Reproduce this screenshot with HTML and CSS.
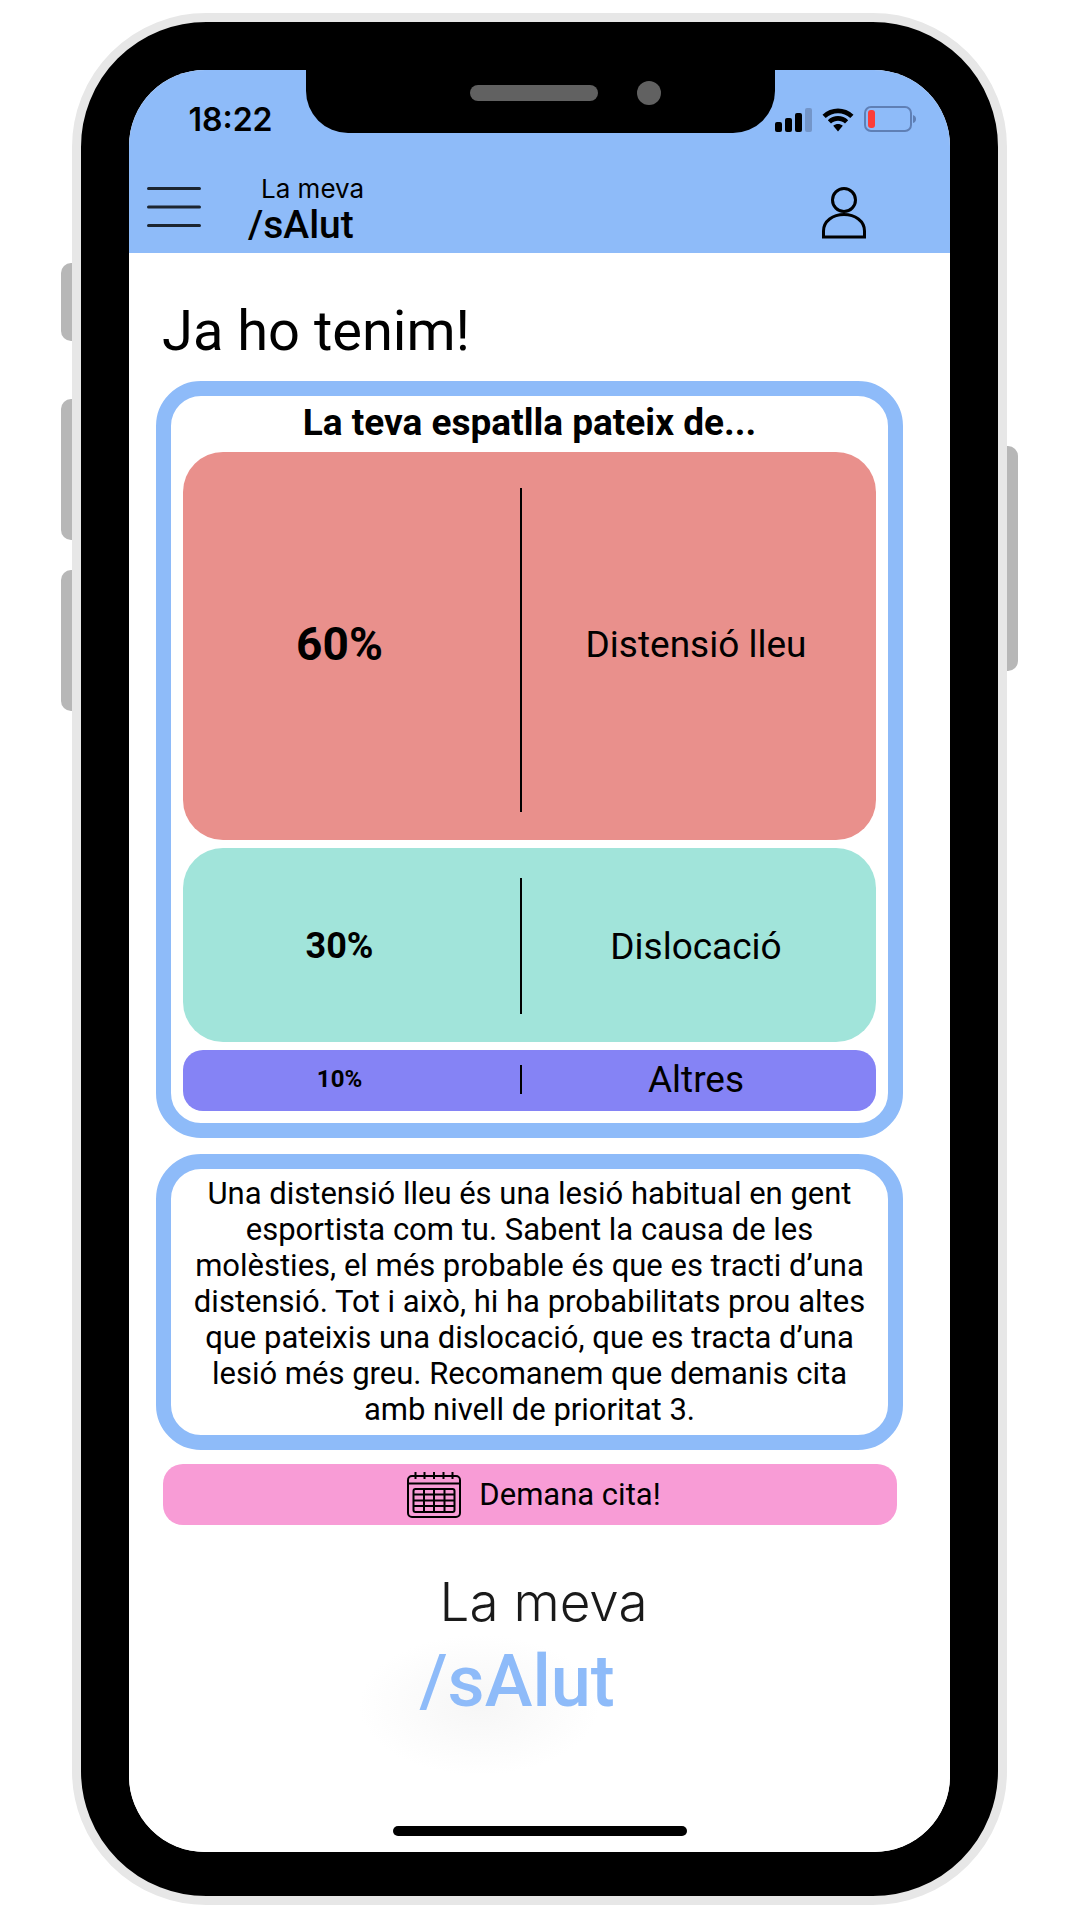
FILE: index.html
```html
<!DOCTYPE html>
<html lang="ca">
<head>
  <meta charset="utf-8">
  <meta name="viewport" content="width=device-width, initial-scale=1">
  <title>La meva /sAlut</title>
  <link rel="stylesheet" href="styles.css">
</head>
<body>
  <div class="phone">
    <span class="side-key side-key--mute"></span>
    <span class="side-key side-key--up"></span>
    <span class="side-key side-key--down"></span>
    <span class="side-key side-key--power"></span>

    <div class="screen">
      <div class="top">
        <div class="status">
          <div class="status-side"><time class="clock">18:22</time></div>
          <div class="notch">
            <span class="speaker"></span>
            <span class="camera"></span>
          </div>
          <div class="status-side status-side--end">
            <svg class="signal" viewBox="0 0 37 24" aria-hidden="true">
              <rect x="0" y="14" width="7" height="10" rx="2"/>
              <rect x="10" y="10" width="7" height="14" rx="2"/>
              <rect x="20" y="5" width="7" height="19" rx="2"/>
              <rect class="dim" x="30" y="0" width="7" height="24" rx="2"/>
            </svg>
            <svg class="wifi" viewBox="0 0 32 24" aria-hidden="true">
              <path d="M0.500 6.800C9 -1.600 23 -1.600 31.500 6.800L28.300 10C21.500 3.600 10.500 3.600 3.700 10Z"/>
              <path d="M5.800 12.200C11.500 6.700 20.500 6.700 26.200 12.200L23 15.400C19 11.700 13 11.700 9 15.400Z"/>
              <path d="M11.200 17.800C14 15.500 18 15.500 20.800 17.800L16 23.500Z"/>
            </svg>
            <svg class="battery" viewBox="0 0 53 26" aria-hidden="true">
              <rect class="case" x="1" y="1" width="46" height="24" rx="6"/>
              <rect class="charge" x="4" y="4" width="7" height="18" rx="3"/>
              <path class="tip" d="M49 9Q52 10 52 13Q52 16 49 17Z"/>
            </svg>
          </div>
        </div>
        <header class="app-bar">
          <button class="icon-button" type="button" aria-label="Menú">
            <svg class="menu-icon" viewBox="0 0 54 42" aria-hidden="true">
              <path d="M1.500 2.500H52.500M1.500 21H52.500M1.500 39.500H52.500"/>
            </svg>
          </button>
          <a class="brand" href="#"><span class="brand-top">La meva</span><span class="brand-name">/sAlut</span></a>
          <button class="icon-button icon-button--end" type="button" aria-label="Perfil">
            <svg class="user-icon" viewBox="0 0 44 52" aria-hidden="true">
              <circle cx="22" cy="13" r="11.500"/>
              <path d="M1.500 50V44C1.500 34 11 27.500 22 27.500S42.500 34 42.500 44V50Z"/>
            </svg>
          </button>
        </header>
      </div>

      <main class="content">
        <h1 class="title">Ja ho tenim!</h1>

        <section class="card">
          <h2 class="card-title">La teva espatlla pateix de...</h2>
          <ul class="results">
            <li class="result result--high"><strong class="share">60%</strong><span class="name">Distensió lleu</span></li>
            <li class="result result--medium"><strong class="share">30%</strong><span class="name">Dislocació</span></li>
            <li class="result result--low"><strong class="share">10%</strong><span class="name">Altres</span></li>
          </ul>
        </section>

        <section class="card card--text">
          <p class="advice">Una distensió lleu és una lesió habitual en gent<br>
            esportista com tu. Sabent la causa de les<br>
            molèsties, el més probable és que es tracti d’una<br>
            distensió. Tot i això, hi ha probabilitats prou altes<br>
            que pateixis una dislocació, que es tracta d’una<br>
            lesió més greu. Recomanem que demanis cita<br>
            amb nivell de prioritat 3.</p>
        </section>

        <button class="book" type="button">
          <svg class="calendar" viewBox="0 0 54 46" aria-hidden="true">
            <rect x="1" y="4" width="52" height="41" rx="4"/>
            <path d="M1 11.500H53M8.500 0V7M17.500 0V7M27 0V7M36.500 0V7M45.500 0V7"/>
            <rect x="6.500" y="17" width="41" height="23" rx="2"/>
            <path d="M6.500 22.500H47.500M6.500 28.500H47.500M6.500 34H47.500M17 17V40M27 17V40M37.500 17V40"/>
          </svg>
          <span>Demana cita!</span>
        </button>
      </main>

      <footer class="foot">
        <div class="logo"><span class="logo-top">La meva</span><span class="logo-name">/sAlut</span></div>
        <span class="home-bar"></span>
      </footer>
    </div>
  </div>
</body>
</html>
```

FILE: styles.css
```css
:root {
  --blue: #8ebbf9;
  --key: #b7b7b7;
}

* {
  box-sizing: border-box;
}

body {
  margin: 0;
  padding: 13px 73px 14px 72px;
  background: #fff;
  color: #000;
  font-family: Roboto, "Liberation Sans", sans-serif;
}

h1, h2, p, ul {
  margin: 0;
  padding: 0;
}

button {
  border: 0;
  padding: 0;
  background: none;
  color: inherit;
  font: inherit;
  cursor: pointer;
}

svg {
  display: block;
}

/* Device frame */
.phone {
  position: relative;
  padding: 48px 48px 44px;
  border: 9px solid #e7e7e7;
  border-radius: 134px;
  background: #000;
}

.side-key {
  position: absolute;
  left: -20px;
  width: 11px;
  height: 141px;
  border-radius: 10px 0 0 10px;
  background: var(--key);
}

.side-key--mute {
  top: 241px;
  height: 78px;
}

.side-key--up {
  top: 377px;
}

.side-key--down {
  top: 548px;
}

.side-key--power {
  top: 424px;
  right: -20px;
  left: auto;
  height: 225px;
  border-radius: 0 10px 10px 0;
}

.screen {
  overflow: hidden;
  border-radius: 76px;
  background: #fff;
}

/* Status bar and app bar */
.top {
  background: var(--blue);
}

.status {
  display: flex;
  height: 63px;
  padding-left: 1px;
}

.status-side {
  display: flex;
  flex: 1;
  align-items: flex-end;
  justify-content: flex-end;
  padding: 0 33px 1px 0;
}

.status-side--end {
  gap: 10px;
}

.clock {
  font-family: Inter, sans-serif;
  font-size: 32px;
  font-weight: 600;
  line-height: 24px;
}

.notch {
  display: flex;
  align-items: flex-start;
  justify-content: flex-end;
  gap: 39px;
  width: 469px;
  padding: 11px 114px 0 0;
  border-radius: 0 0 42px 42px;
  background: #000;
}

.speaker {
  width: 128px;
  height: 16px;
  margin-top: 4px;
  border-radius: 8px;
  background: #616161;
}

.camera {
  width: 24px;
  height: 24px;
  border-radius: 50%;
  background: #616161;
}

.signal {
  width: 37px;
  height: 24px;
}

.signal .dim {
  fill: #7395c9;
}

.wifi {
  width: 32px;
  height: 24px;
}

.battery {
  width: 53px;
  height: 26px;
}

.battery .case {
  fill: none;
  stroke: #5f7fb5;
  stroke-width: 2;
}

.battery .charge {
  fill: #fc3d39;
}

.battery .tip {
  fill: #5f7fb5;
}

.app-bar {
  display: flex;
  align-items: flex-start;
  padding: 41px 84px 7px 18px;
}

.icon-button {
  padding: 12px 0;
}

.icon-button--end {
  margin-left: auto;
  padding: 13px 0 0;
}

.menu-icon {
  width: 54px;
  height: 42px;
  fill: none;
  stroke: #1c2530;
  stroke-width: 3;
  stroke-linecap: round;
}

.user-icon {
  width: 44px;
  height: 52px;
  fill: none;
  stroke: #000;
  stroke-width: 3;
}

.brand {
  display: flex;
  flex-direction: column;
  margin-left: 47px;
  color: inherit;
  text-decoration: none;
}

.brand-top {
  padding-left: 13px;
  font-family: Inter, sans-serif;
  font-size: 26px;
  font-weight: 400;
  line-height: 30px;
}

.brand-name {
  font-size: 39px;
  font-weight: 500;
  line-height: 42px;
}

/* Result */
.content {
  display: flex;
  flex-direction: column;
  gap: 14px;
  padding: 46px 47px 0 27px;
}

.title {
  padding: 0 0 4px 6px;
  font-size: 56px;
  font-weight: 400;
  line-height: 64px;
}

.card {
  padding: 9px 12px 12px;
  border: 15px solid var(--blue);
  border-radius: 45px;
  background: #fff;
}

.card--text {
  margin-top: 2px;
  padding: 7px 0;
}

.card-title {
  font-size: 37px;
  font-weight: 700;
  line-height: 36px;
  text-align: center;
}

.results {
  display: grid;
  gap: 8px;
  margin-top: 11px;
  list-style: none;
}

.result {
  display: grid;
  grid-template-columns: 337px 1fr;
  align-items: center;
  border-radius: 40px;
  text-align: center;
  line-height: 29px;
}

.share {
  padding-right: 24px;
}

.name {
  display: flex;
  align-items: center;
  align-self: stretch;
  justify-content: center;
  border-left: 2px solid #000;
  padding-right: 6px;
  font-size: 37px;
}

.result--high {
  height: 388px;
  padding: 36px 0 28px;
  background: #e9908c;
  font-size: 46px;
}

.result--high > * {
  padding-bottom: 12px;
}

.result--medium {
  height: 194px;
  padding: 30px 0 28px;
  background: #a1e4da;
  font-size: 36px;
}

.result--low {
  height: 61px;
  padding: 15px 0 17px;
  border-radius: 20px;
  background: #8583f5;
  font-size: 24px;
}

.advice {
  font-size: 31px;
  line-height: 36px;
  text-align: center;
}

.book {
  display: flex;
  align-items: center;
  justify-content: center;
  gap: 18px;
  min-height: 61px;
  margin: 0 6px 0 7px;
  padding-left: 8px;
  border-radius: 20px;
  background: #f89cd6;
  font-size: 31px;
}

.calendar {
  width: 54px;
  height: 46px;
  fill: none;
  stroke: #000;
  stroke-width: 2;
}

/* Closing logo */
.foot {
  display: flex;
  flex-direction: column;
  align-items: center;
  padding: 43px 0 16px;
  background: radial-gradient(120px 70px at 350px 180px, #f6f6f6, #fff);
}

.logo {
  display: flex;
  flex-direction: column;
  align-items: flex-start;
  padding-right: 12px;
}

.logo-top {
  padding-left: 20px;
  color: #1a1a1a;
  font-family: Inter, sans-serif;
  font-size: 53px;
  font-weight: 300;
  line-height: 68px;
}

.logo-name {
  color: var(--blue);
  font-size: 72px;
  font-weight: 500;
  line-height: 92px;
}

.home-bar {
  width: 294px;
  height: 10px;
  margin-top: 98px;
  border-radius: 5px;
  background: #000;
}
```
